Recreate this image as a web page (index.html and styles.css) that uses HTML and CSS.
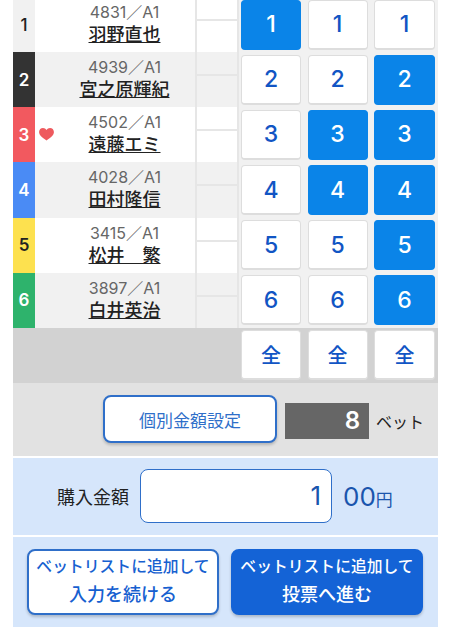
FILE: index.html
```html
<!DOCTYPE html>
<html lang="ja">
<head>
    <meta charset="UTF-8">
    <meta name="viewport" content="width=device-width, initial-scale=1.0">
    <title>投票</title>
    <link rel="stylesheet" href="styles.css">
</head>
<body>
    <div class="vote">
        <div class="racer">
            <div class="waku waku-1">1</div>
            <div class="info">
                <p class="reg">4831／A1</p>
                <a class="name" href="#">羽野直也</a>
            </div>
            <div class="stats"><span></span><span></span></div>
            <div class="picks">
                <button class="pick on">1</button>
                <button class="pick">1</button>
                <button class="pick">1</button>
            </div>
        </div>
        <div class="racer even">
            <div class="waku waku-2">2</div>
            <div class="info">
                <p class="reg">4939／A1</p>
                <a class="name" href="#">宮之原輝紀</a>
            </div>
            <div class="stats"><span></span><span></span></div>
            <div class="picks">
                <button class="pick">2</button>
                <button class="pick">2</button>
                <button class="pick on">2</button>
            </div>
        </div>
        <div class="racer">
            <div class="waku waku-3">3</div>
            <div class="info">
                <svg class="heart" viewBox="0 0 16 14" width="15" height="13"><path d="M8 13.500C3 10 0 7.500 0 4.300 0 1.800 1.900 0 4.200 0 5.800 0 7.200.8 8 2.200 8.800.8 10.200 0 11.800 0 14.100 0 16 1.800 16 4.300 16 7.500 13 10 8 13.500Z" fill="#ee5a5e"/></svg>
                <p class="reg">4502／A1</p>
                <a class="name" href="#">遠藤エミ</a>
            </div>
            <div class="stats"><span></span><span></span></div>
            <div class="picks">
                <button class="pick">3</button>
                <button class="pick on">3</button>
                <button class="pick on">3</button>
            </div>
        </div>
        <div class="racer even">
            <div class="waku waku-4">4</div>
            <div class="info">
                <p class="reg">4028／A1</p>
                <a class="name" href="#">田村隆信</a>
            </div>
            <div class="stats"><span></span><span></span></div>
            <div class="picks">
                <button class="pick">4</button>
                <button class="pick on">4</button>
                <button class="pick on">4</button>
            </div>
        </div>
        <div class="racer">
            <div class="waku waku-5">5</div>
            <div class="info">
                <p class="reg">3415／A1</p>
                <a class="name" href="#">松井　繁</a>
            </div>
            <div class="stats"><span></span><span></span></div>
            <div class="picks">
                <button class="pick">5</button>
                <button class="pick">5</button>
                <button class="pick on">5</button>
            </div>
        </div>
        <div class="racer even">
            <div class="waku waku-6">6</div>
            <div class="info">
                <p class="reg">3897／A1</p>
                <a class="name" href="#">白井英治</a>
            </div>
            <div class="stats"><span></span><span></span></div>
            <div class="picks">
                <button class="pick">6</button>
                <button class="pick">6</button>
                <button class="pick on">6</button>
            </div>
        </div>

        <div class="all-row">
            <div class="picks">
                <button class="pick all">全</button>
                <button class="pick all">全</button>
                <button class="pick all">全</button>
            </div>
        </div>

        <div class="count-row">
            <button class="detail-btn">個別金額設定</button>
            <div class="count">8</div>
            <span class="count-unit">ベット</span>
        </div>

        <div class="amount-row">
            <span class="amount-label">購入金額</span>
            <div class="amount-box">1</div>
            <span class="amount-unit">00<small>円</small></span>
        </div>

        <div class="action-row">
            <button class="action">ベットリストに追加して<br><b>入力を続ける</b></button>
            <button class="action primary">ベットリストに追加して<br><b>投票へ進む</b></button>
        </div>
    </div>
</body>
</html>
```

FILE: styles.css
```css
* {
    box-sizing: border-box;
}

html, body {
    height: 629px;
    overflow: hidden;
}

body {
    margin: 0;
    background: #fff;
    font-family: Inter, "Noto Sans CJK JP", sans-serif;
}

.vote {
    width: 425px;
    margin: -3px 0 0 13px;
}

.racer {
    display: flex;
    height: 55.17px;
    background: #fff;
}

.racer.even {
    background: #f1f1f1;
}

.waku {
    width: 22px;
    margin-right: 1px;
    display: flex;
    align-items: center;
    justify-content: center;
    color: #fff;
    font-size: 17px;
    font-weight: 600;
}

.waku-1 { background: #f1f1f1; color: #222; font-weight: 500; }
.waku-2 { background: #333; }
.waku-3 { background: #f2595f; }
.waku-4 { background: #4a8bf5; }
.waku-5 { background: #fde14f; color: #222; }
.waku-6 { background: #2eb36c; }

.info {
    position: relative;
    width: 159px;
    text-align: center;
    padding: 5px 0 0 18px;
}

.reg {
    margin: 0;
    font-size: 16px;
    line-height: 20px;
    color: #666;
}

.name {
    display: inline-block;
    font-size: 18px;
    font-weight: 500;
    line-height: 25px;
    color: #222;
    text-decoration: underline;
    text-underline-offset: 1px;
}

.heart {
    position: absolute;
    left: 3px;
    top: 21px;
}

.stats {
    width: 44px;
    display: flex;
    flex-direction: column;
    border-left: 2px solid #e6e6e6;
    border-right: 2px solid #e6e6e6;
}

.stats span:first-child {
    flex: 0 0 24px;
    border-bottom: 2px solid #e6e6e6;
}

.picks {
    width: 199px;
    margin-left: auto;
    display: grid;
    grid-template-columns: 60px 60px 61px;
    justify-content: space-between;
    align-items: center;
    padding: 0 3px 0 2px;
    background: #f1f1f1;
}

.pick {
    height: 50px;
    padding: 0;
    background: #fff;
    border: 1px solid #ddd;
    border-bottom-width: 2px;
    border-radius: 4px;
    color: #1155c4;
    font-family: inherit;
    font-size: 23px;
    font-weight: 500;
}

.pick.on {
    background: #0a84e8;
    border-color: #0a84e8;
    color: #fff;
}

.pick.all {
    font-size: 20px;
}

.all-row {
    height: 55px;
    display: flex;
    background: #d2d2d2;
}

.all-row .picks {
    background: none;
}

.count-row {
    height: 75px;
    display: flex;
    align-items: center;
    padding: 0 12px 0 90px;
    background: #e2e2e2;
    border-bottom: 2px solid #fff;
}

.detail-btn {
    width: 174px;
    height: 48px;
    background: #fff;
    border: 2px solid #2f6fc9;
    border-radius: 8px;
    box-shadow: 0 2px 3px rgba(0, 0, 0, 0.2);
    color: #2f6fc9;
    font-family: inherit;
    font-size: 17px;
}

.count {
    width: 84px;
    height: 36px;
    margin: 3px 0 0 8px;
    padding-right: 9px;
    background: #666;
    color: #fff;
    font-size: 24px;
    font-weight: 600;
    line-height: 36px;
    text-align: right;
}

.count-unit {
    margin: 3px 0 0 7px;
    font-size: 16px;
    color: #222;
}

.amount-row {
    height: 79px;
    display: flex;
    align-items: center;
    padding-left: 44px;
    background: #d6e6fb;
    border-bottom: 2px solid #fff;
}

.amount-label {
    font-size: 18px;
    color: #222;
}

.amount-box {
    width: 192px;
    height: 54px;
    margin-left: 11px;
    padding-right: 10px;
    background: #fff;
    border: 1px solid #2f6fc9;
    border-radius: 8px;
    color: #1a55ad;
    font-size: 26px;
    line-height: 52px;
    text-align: right;
}

.amount-unit {
    margin-left: 11px;
    color: #1a55ad;
    font-size: 26px;
}

.amount-unit small {
    font-size: 17px;
}

.action-row {
    height: 90px;
    display: flex;
    justify-content: space-between;
    padding: 12px 15px 0 14px;
    background: #d6e6fb;
}

.action {
    width: 192px;
    height: 66px;
    padding: 0;
    background: #fff;
    border: 2px solid #2f6fc9;
    border-radius: 8px;
    box-shadow: 0 2px 3px rgba(0, 0, 0, 0.2);
    color: #1660d0;
    font-family: inherit;
    font-size: 15.8px;
    font-weight: 500;
    line-height: 28px;
}

.action b {
    font-size: 18px;
    font-weight: 500;
}

.action.primary {
    background: #1463d6;
    border-color: #1463d6;
    color: #fff;
}
```
